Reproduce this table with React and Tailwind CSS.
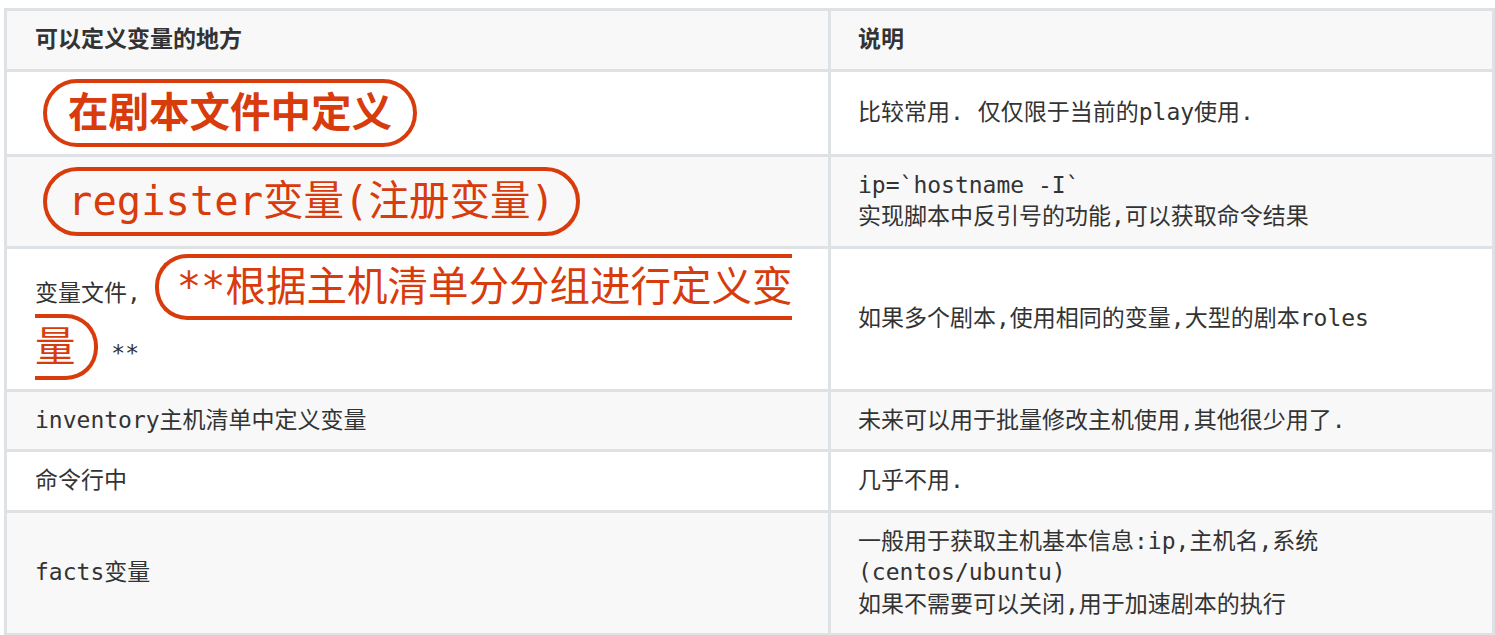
const RED = 'text-[#d83b0c]';

const Cell = ({ children, className = '', pad = 'py-[13px]', px = 'pl-[28px] pr-[28px]' }) => (
  <div className={`flex flex-col justify-center ${px} ${pad} ${className}`}>{children}</div>
);

const rows = [
  {
    bg: 'bg-white',
    pad: 'py-[7px]',
    left: (
      <div className="flex">
        <span className={`ml-[8px] inline-block rounded-full border-[4px] border-[#d83b0c] px-[21px] py-[4px] text-[40.5px] font-bold leading-[52px] ${RED}`}>
          在剧本文件中定义
        </span>
      </div>
    ),
    right: '比较常用. 仅仅限于当前的play使用.',
  },
  {
    bg: 'bg-[#f8f8f8]',
    pad: 'py-[10px]',
    left: (
      <div className="flex">
        <span className={`ml-[8px] inline-block rounded-full border-[4px] border-[#d83b0c] px-[21px] py-[4px] text-[40.5px] leading-[53px] ${RED}`}>
          register变量(注册变量)
        </span>
      </div>
    ),
    right: (
      <>
        ip=`hostname -I`
        <br />
        实现脚本中反引号的功能,可以获取命令结果
      </>
    ),
  },
  {
    bg: 'bg-white',
    pad: 'pt-[8px] pb-[12px]',
    left: (
      <div>
        变量文件,{' '}
        <span className={`rounded-[32px] border-[4px] border-[#d83b0c] px-[18px] py-[5px] text-[40.5px] leading-[60px] ${RED}`}>
          **根据主机清单分分组进行定义变量
        </span>{' '}
        **
      </div>
    ),
    right: '如果多个剧本,使用相同的变量,大型的剧本roles',
  },
  { bg: 'bg-[#f8f8f8]', left: 'inventory主机清单中定义变量', right: '未来可以用于批量修改主机使用,其他很少用了.' },
  { bg: 'bg-white', left: '命令行中', right: '几乎不用.' },
  {
    bg: 'bg-[#f8f8f8]',
    left: 'facts变量',
    right: (
      <>
        一般用于获取主机基本信息:ip,主机名,系统
        <br />
        (centos/ubuntu)
        <br />
        如果不需要可以关闭,用于加速剧本的执行
      </>
    ),
  },
];

export default function App() {
  return (
    <div className="min-h-[635px] bg-white pl-[4px] pt-[8px] font-['DejaVu_Sans_Mono','Noto_Sans_CJK_SC',monospace] text-[23px] leading-[31.5px] text-[#333]">
      <div className="grid w-[1491px] grid-cols-[821px_661px] gap-[3px] bg-[#dfe2e5] p-[3px]">
        {/* header */}
        <Cell className="bg-[#f8f8f8] font-bold">可以定义变量的地方</Cell>
        <Cell className="bg-[#f8f8f8] font-bold" px="pl-[27px] pr-[28px]">说明</Cell>

        {rows.map((r, i) => (
          <div key={i} className="contents">
            <Cell className={r.bg} pad={r.pad}>
              {r.left}
            </Cell>
            <Cell className={r.bg} px="pl-[27px] pr-[28px]">
              <div>{r.right}</div>
            </Cell>
          </div>
        ))}
      </div>
    </div>
  );
}
